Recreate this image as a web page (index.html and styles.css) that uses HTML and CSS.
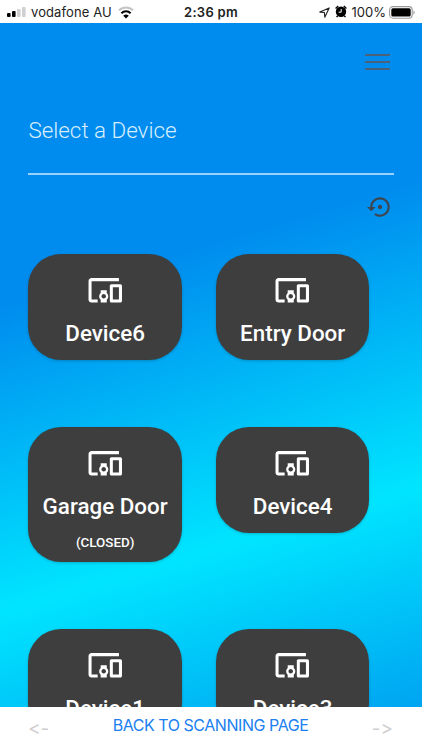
FILE: index.html
```html
<!DOCTYPE html>
<html lang="en">
<head>
    <meta charset="UTF-8">
    <meta name="viewport" content="width=device-width, initial-scale=1.0">
    <title>Select a Device</title>
    <link rel="stylesheet" href="styles.css">
</head>
<body>
    <!-- shared icon shapes -->
    <svg class="sprite" width="0" height="0">
        <symbol id="devices" viewBox="0 0 24 24">
            <path d="M3 6h18V4H3c-1.1 0-2 .9-2 2v12c0 1.1.9 2 2 2h4v-2H3V6zm10 6H9v1.78c-.61.55-1 1.33-1 2.22s.39 1.67 1 2.22V20h4v-1.78c.61-.55 1-1.34 1-2.22s-.39-1.67-1-2.22V12zm-2 5.5c-.83 0-1.5-.67-1.5-1.5s.67-1.5 1.5-1.5 1.5.67 1.5 1.5-.67 1.5-1.5 1.5zM22 8h-6c-.5 0-1 .5-1 1v10c0 .5.5 1 1 1h6c.5 0 1-.5 1-1V9c0-.5-.5-1-1-1zm-1 10h-4v-8h4v8z"/>
        </symbol>
    </svg>

    <div class="app">
        <div class="status-bar">
            <div class="status-left">
                <svg class="signal" width="19" height="10" viewBox="0 0 19 10">
                    <rect x="0" y="6" width="3.6" height="4" rx="1"/>
                    <rect x="5" y="4" width="3.6" height="6" rx="1"/>
                    <rect class="off" x="10" y="2" width="3.6" height="8" rx="1"/>
                    <rect class="off" x="15" y="0" width="3.6" height="10" rx="1"/>
                </svg>
                <span class="carrier">vodafone AU</span>
                <svg class="wifi" width="16" height="13" viewBox="0 0 16 13">
                    <path class="off" d="M1 4.4a10 10 0 0 1 14 0"/>
                    <path d="M3.4 7.2a6.6 6.6 0 0 1 9.2 0"/>
                    <path class="dot" d="M8 12.6L5.2 9.8a4 4 0 0 1 5.6 0z"/>
                </svg>
            </div>
            <span class="time">2:36 pm</span>
            <div class="status-right">
                <svg class="location" width="11" height="11" viewBox="0 0 11 11">
                    <path d="M10.2.9L.8 5.1l4.6.4.4 4.7z"/>
                </svg>
                <svg class="alarm" width="12" height="13" viewBox="0 0 12 13">
                    <circle cx="6" cy="6.8" r="4.5"/>
                    <path d="M.6 3.4L3.2 1M11.4 3.4L8.8 1M2.6 10.8l-1 1.3M9.4 10.8l1 1.3"/>
                    <path class="hands" d="M6.2 4v3.2H3.6"/>
                </svg>
                <span class="percent">100%</span>
                <svg class="battery" width="26" height="13" viewBox="0 0 26 13">
                    <rect class="case" x=".6" y=".6" width="22.6" height="11.6" rx="3.4"/>
                    <rect x="2.3" y="2.2" width="19.4" height="8.4" rx="1.6"/>
                    <path class="tip" d="M24.4 4.4c1.6.6 1.6 3.4 0 4z"/>
                </svg>
            </div>
        </div>

        <div class="content">
            <div class="menu">
                <span></span>
                <span></span>
                <span></span>
            </div>
            <h1>Select a Device</h1>
            <div class="toolbar">
                <svg class="restore" viewBox="0 0 24 24">
                    <path d="M14 12c0-1.1-.9-2-2-2s-2 .9-2 2 .9 2 2 2 2-.9 2-2zm-2-9c-4.97 0-9 4.03-9 9H0l4 4 4-4H5c0-3.87 3.13-7 7-7s7 3.13 7 7-3.13 7-7 7c-1.51 0-2.91-.49-4.06-1.3l-1.42 1.44C8.04 20.3 9.94 21 12 21c4.97 0 9-4.03 9-9s-4.03-9-9-9z"/>
                </svg>
            </div>

            <div class="devices">
                <div class="card">
                    <svg class="icon"><use href="#devices"/></svg>
                    <div class="name">Device6</div>
                </div>
                <div class="card">
                    <svg class="icon"><use href="#devices"/></svg>
                    <div class="name">Entry Door</div>
                </div>
                <div class="card">
                    <svg class="icon"><use href="#devices"/></svg>
                    <div class="name">Garage Door</div>
                    <div class="state">(CLOSED)</div>
                </div>
                <div class="card">
                    <svg class="icon"><use href="#devices"/></svg>
                    <div class="name">Device4</div>
                </div>
                <div class="card">
                    <svg class="icon"><use href="#devices"/></svg>
                    <div class="name">Device1</div>
                </div>
                <div class="card">
                    <svg class="icon"><use href="#devices"/></svg>
                    <div class="name">Device3</div>
                </div>
            </div>
        </div>

        <div class="footer">
            <span class="arrow">&lt;-</span>
            <a class="back">BACK TO SCANNING PAGE</a>
            <span class="arrow">-&gt;</span>
        </div>
    </div>
</body>
</html>
```

FILE: styles.css
```css
* {
    box-sizing: border-box;
}
body {
    margin: 0;
    font-family: Roboto, sans-serif;
    background-color: #ffffff;
}
.sprite {
    display: none;
}
.app {
    display: flex;
    flex-direction: column;
    height: 750px;
    overflow: hidden;
}

/* status bar */
.status-bar {
    display: grid;
    grid-template-columns: 1fr auto 1fr;
    align-items: center;
    height: 23px;
    flex-shrink: 0;
    padding: 1px 7px 0 7px;
    font-family: Inter, sans-serif;
    font-size: 13px;
    color: #222;
}
.status-left,
.status-right {
    display: flex;
    align-items: center;
}
.status-right {
    justify-content: flex-end;
}
.signal .off {
    fill: #d0d0d0;
}
.carrier {
    margin-left: 5px;
    letter-spacing: 0.1px;
}
.wifi {
    margin-left: 6px;
    fill: none;
    stroke: #000;
    stroke-width: 2;
}
.wifi .off {
    stroke: #c4c4c4;
}
.wifi .dot {
    fill: #000;
    stroke: none;
}
.time {
    font-weight: 600;
    font-size: 13px;
    letter-spacing: 0.3px;
}
.location {
    fill: none;
    stroke: #222;
    stroke-width: 1.1;
    stroke-linejoin: round;
}
.alarm {
    margin: 0 5px 1px 5px;
    stroke: #000;
    stroke-width: 1.4;
}
.alarm .hands {
    fill: none;
    stroke: #fff;
    stroke-width: 1;
}
.battery {
    margin-left: 3px;
}
.battery .case {
    fill: none;
    stroke: #999;
    stroke-width: 1.1;
}
.battery .tip {
    fill: #999;
}

/* main area */
.content {
    flex: 1;
    min-height: 0;
    overflow: hidden;
    padding: 31px 28px 0 28.4px;
    background: linear-gradient(163.3deg, #008cee 35%, #00e5ff 72.8%, #00a4f1 100%);
}
.menu {
    display: flex;
    flex-direction: column;
    gap: 5px;
    width: 25px;
    margin: 0 4px 0 auto;
}
.menu span {
    height: 2px;
    background-color: #4b6079;
}
h1 {
    margin: 45px 0 0;
    height: 60px;
    border-bottom: 2px solid #99d1f8;
    font-size: 22.4px;
    font-weight: 300;
    line-height: 30px;
    color: #d8eefc;
}
.toolbar {
    display: flex;
    height: 79px;
    padding-top: 19px;
}
.restore {
    width: 26px;
    height: 26px;
    margin: 0 1px 0 auto;
    fill: #3d4650;
}
.devices {
    display: grid;
    grid-template-columns: 153.5px 153.5px;
    align-items: start;
    gap: 67.5px 34px;
}
.card {
    display: flex;
    flex-direction: column;
    align-items: center;
    height: 105.5px;
    padding-top: 18px;
    border-radius: 33px;
    background-color: #3e3e3e;
    box-shadow: 0 1px 3px rgba(0, 0, 0, 0.2);
    color: #ffffff;
    white-space: nowrap;
}
.card:has(.state) {
    height: 134.5px;
}
.icon {
    width: 36.5px;
    height: 36.5px;
    fill: #ffffff;
}
.name {
    margin-top: 10px;
    font-size: 22.4px;
    font-weight: 500;
    line-height: 28px;
}
.state {
    margin-top: 14px;
    font-size: 13.4px;
    font-weight: 500;
    line-height: 18px;
}

/* bottom bar */
.footer {
    display: flex;
    justify-content: space-between;
    height: 43px;
    flex-shrink: 0;
    padding: 7px 29px 0 28px;
    background-color: #ffffff;
    font-family: Inter, sans-serif;
}
.arrow {
    padding-top: 3px;
    font-size: 19px;
    line-height: 24px;
    font-variant-ligatures: none;
    font-feature-settings: "calt" 0;
    color: #cfcfcf;
}
.back {
    font-size: 16px;
    line-height: 22px;
    letter-spacing: -0.45px;
    color: #2080f0;
}
```
